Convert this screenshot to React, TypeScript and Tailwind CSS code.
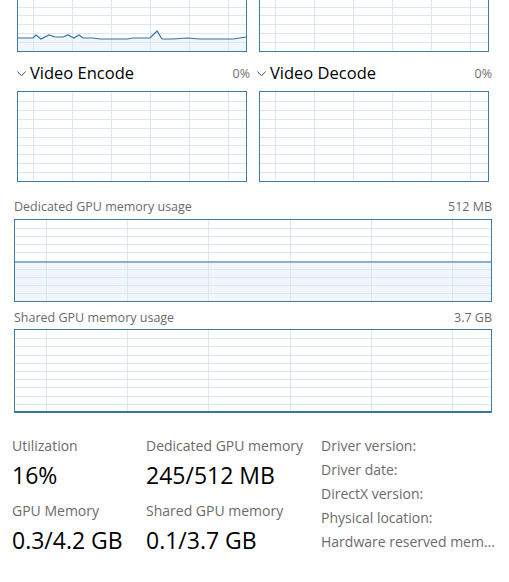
import React from 'react';

type Pt = [number, number];

interface GraphProps {
  w: number;
  h: number;
  vx: number;
  vs: number;
  rows?: number;
  line?: Pt[];
}

// grid chart like the task manager performance graphs
function Graph({ w, h, vx, vs, rows = 10, line }: GraphProps) {
  const iw = w - 2;
  const ih = h - 2;
  const vlines: number[] = [];
  for (let x = vx; x < iw; x += vs) vlines.push(Math.round(x) + 0.5);
  const hlines: number[] = [];
  for (let i = 1; i < rows; i++) hlines.push(Math.round((ih * i) / rows) + 0.5);

  const pts = line ? line.map(([x, y]) => `${x},${y}`).join(' ') : '';
  const area = line ? `0,${ih} ${pts} ${iw},${ih}` : '';

  return (
    <div className="border border-[#3a7ca6] bg-white shrink-0" style={{ width: w, height: h }}>
      <svg width={iw} height={ih} className="block">
        {line && <polygon points={area} fill="#f1f6fb" />}
        {hlines.map((y) => (
          <line key={'h' + y} x1={0} x2={iw} y1={y} y2={y} stroke="#d9e8f2" strokeWidth={1} />
        ))}
        {vlines.map((x) => (
          <line key={'v' + x} x1={x} x2={x} y1={0} y2={ih} stroke="#d9e8f2" strokeWidth={1} />
        ))}
        {line && <polyline points={pts} fill="none" stroke="#33739b" strokeWidth={1.2} />}
      </svg>
    </div>
  );
}

function Chevron() {
  return (
    <svg width="10" height="6" viewBox="0 0 10 6" className="shrink-0">
      <polyline points="0.5,0.5 4.5,4.8 8.5,0.5" fill="none" stroke="#555" strokeWidth="1" />
    </svg>
  );
}

function EngineHeader({ title, className }: { title: string; className: string }) {
  return (
    <div className={`flex items-center h-[24px] ${className}`}>
      <Chevron />
      <span className="ml-[3px] text-[16.5px] text-black leading-none -translate-y-[1px]">{title}</span>
      <span className="ml-auto text-[12.5px] text-[#707070]">0%</span>
    </div>
  );
}

// 3D usage, in svg coordinates
const gpuLine: Pt[] = [
  [0, 76], [15, 76], [18, 73], [23, 77], [31, 73], [37, 75], [45, 75], [50, 73], [56, 76],
  [61, 73], [65, 76], [75, 76], [82, 77], [109, 77], [115, 76], [132, 76], [139, 69],
  [144, 77], [155, 77], [169, 76], [182, 77], [215, 77], [228, 75],
];

function Stat({ label, value, mt = '' }: { label: string; value: string; mt?: string }) {
  return (
    <div className={mt}>
      <div className="text-[14px] leading-[20px] text-[#6b6b6b]">{label}</div>
      <div className="mt-[4px] text-[23px] leading-[30px] text-black">{value}</div>
    </div>
  );
}

export default function App() {
  return (
    <div className="w-[509px] h-[582px] overflow-hidden bg-white font-['Open_Sans','Noto_Sans',sans-serif]">
      <div className="flex gap-[12px] pl-[17px] h-[52px] overflow-hidden items-end">
        <Graph w={230} h={91} vx={15} vs={38.9} line={gpuLine} />
        <Graph w={230} h={91} vx={15} vs={38.9} />
      </div>

      <div className="flex gap-[12px] pl-[17px]">
        <div className="w-[230px]">
          <EngineHeader title="Video Encode" className="mt-[10px] w-[233px]" />
          <div className="mt-[5px]">
            <Graph w={230} h={91} vx={15} vs={38.9} />
          </div>
        </div>
        <div className="w-[230px]">
          <EngineHeader title="Video Decode" className="mt-[10px] -ml-[2px] w-[235px]" />
          <div className="mt-[5px]">
            <Graph w={230} h={91} vx={15} vs={38.9} />
          </div>
        </div>
      </div>

      <div className="pl-[14px] w-[492px]">
        <div className="mt-[17px] flex justify-between text-[12.5px] leading-[16px] text-[#6b6b6b]">
          <span>Dedicated GPU memory usage</span>
          <span>512 MB</span>
        </div>
        <div className="mt-[4px]">
          <Graph w={478} h={83} vx={31} vs={81.2} line={[[0, 42], [476, 42]]} />
        </div>

        <div className="mt-[8px] flex justify-between text-[12.5px] leading-[16px] text-[#6b6b6b]">
          <span>Shared GPU memory usage</span>
          <span>3.7 GB</span>
        </div>
        <div className="mt-[3px]">
          <Graph w={478} h={84} vx={31} vs={81.2} line={[[0, 81.5], [476, 81.5]]} />
        </div>
      </div>

      <div className="flex pl-[12px]">
        <div className="w-[134px] mt-[23px]">
          <Stat label="Utilization" value="16%" />
          <Stat label="GPU Memory" value="0.3/4.2 GB" mt="mt-[11px]" />
        </div>
        <div className="w-[175px] mt-[23px]">
          <Stat label="Dedicated GPU memory" value="245/512 MB" />
          <Stat label="Shared GPU memory" value="0.1/3.7 GB" mt="mt-[11px]" />
        </div>
        <div className="mt-[21px] flex-1 text-[14px] leading-[24px] text-[#6b6b6b] whitespace-nowrap">
          <div>Driver version:</div>
          <div>Driver date:</div>
          <div>DirectX version:</div>
          <div>Physical location:</div>
          <div>Hardware reserved mem...</div>
        </div>
      </div>
    </div>
  );
}
